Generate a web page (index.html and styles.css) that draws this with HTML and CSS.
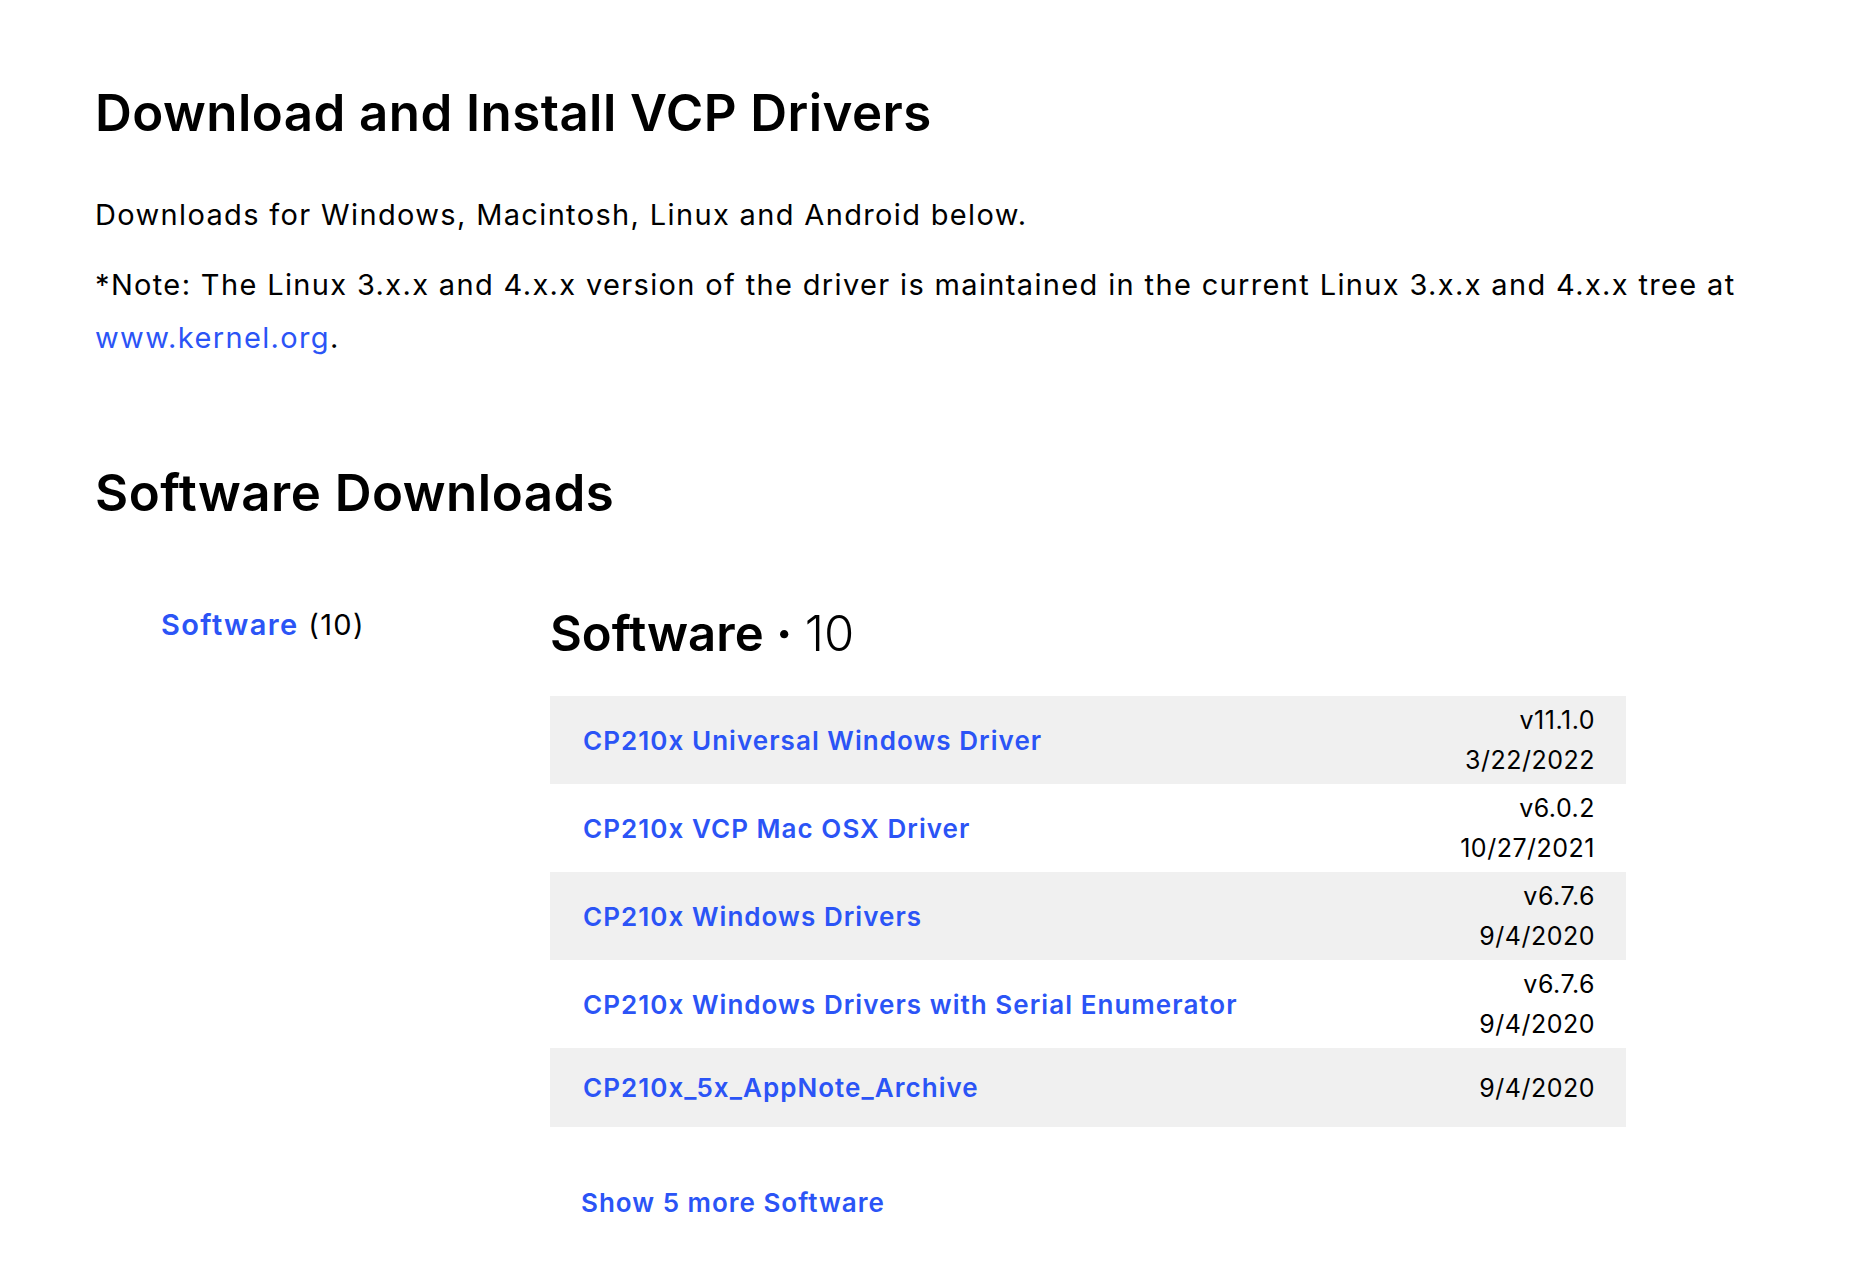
FILE: index.html
```html
<!DOCTYPE html>
<html lang="en">
<head>
<meta charset="utf-8">
<title>Download and Install VCP Drivers</title>
<link rel="stylesheet" href="styles.css">
</head>
<body>
<main class="page">
  <section class="intro">
    <h1 class="title">Download and Install VCP Drivers</h1>
    <p class="text">Downloads for Windows, Macintosh, Linux and Android below.</p>
    <p class="text">*Note: The Linux 3.x.x and 4.x.x version of the driver is maintained in the current Linux 3.x.x and 4.x.x tree at <a class="link" href="#">www.kernel.org</a>.</p>
  </section>
  <section class="downloads">
    <h2 class="section-title">Software Downloads</h2>
    <div class="layout">
      <aside class="sidebar">
        <a class="side-link" href="#">Software</a> <span class="side-count">(10)</span>
      </aside>
      <div class="content">
        <h3 class="group-title">Software <span class="dot">·</span> <span class="count">10</span></h3>
        <ul class="list">
          <li class="row">
            <a class="row-link" href="#">CP210x Universal Windows Driver</a>
            <div class="meta"><span>v11.1.0</span><span>3/22/2022</span></div>
          </li>
          <li class="row">
            <a class="row-link" href="#">CP210x VCP Mac OSX Driver</a>
            <div class="meta"><span>v6.0.2</span><span>10/27/2021</span></div>
          </li>
          <li class="row">
            <a class="row-link" href="#">CP210x Windows Drivers</a>
            <div class="meta"><span>v6.7.6</span><span>9/4/2020</span></div>
          </li>
          <li class="row">
            <a class="row-link" href="#">CP210x Windows Drivers with Serial Enumerator</a>
            <div class="meta"><span>v6.7.6</span><span>9/4/2020</span></div>
          </li>
          <li class="row row-single">
            <a class="row-link" href="#">CP210x_5x_AppNote_Archive</a>
            <div class="meta"><span>9/4/2020</span></div>
          </li>
        </ul>
        <a class="more" href="#">Show 5 more Software</a>
      </div>
    </div>
  </section>
</main>
</body>
</html>
```

FILE: styles.css
```css
* { box-sizing: border-box; }
html, body { margin: 0; padding: 0; background: #ffffff; }
body {
  font-family: Inter, "Noto Sans", "Liberation Sans", sans-serif;
  color: #000000;
}
.page {
  padding: 82px 95px 40px 95px;
}
.title {
  margin: 0;
  font-size: 51px;
  line-height: 62px;
  font-weight: 600;
  letter-spacing: 0.45px;
}
.text {
  margin: 0;
  font-size: 29px;
  line-height: 53px;
  font-weight: 400;
  letter-spacing: 1.35px;
}
.intro .title { margin-bottom: 44px; }
.intro .text + .text { margin-top: 17px; }
.link, .side-link, .row-link, .more {
  color: #2b54f6;
  text-decoration: none;
}
.downloads { margin-top: 98px; }
.section-title {
  margin: 0;
  font-size: 51px;
  line-height: 62px;
  font-weight: 600;
  letter-spacing: 0.5px;
}
.layout {
  display: grid;
  grid-template-columns: 455px 1076px;
  margin-top: 80px;
}
.sidebar {
  padding-left: 66px;
  padding-top: 1px;
  font-size: 29px;
  line-height: 40px;
  letter-spacing: 1.4px;
}
.side-link { font-weight: 600; }
.group-title {
  margin: 0 0 32px 0;
  font-size: 49px;
  line-height: 60px;
  font-weight: 600;
}
.group-title .count { font-weight: 300; }
.group-title .dot { font-weight: 700; }
.list {
  list-style: none;
  margin: 0;
  padding: 0;
}
.row {
  display: flex;
  align-items: center;
  justify-content: space-between;
  height: 88px;
  padding: 0 31px 0 33px;
}
.row:nth-child(odd) { background: #f0f0f0; }
.row-single { height: 79px; }
.row-link {
  font-size: 26px;
  font-weight: 600;
  letter-spacing: 1.05px;
}
.meta {
  display: flex;
  flex-direction: column;
  align-items: flex-end;
  font-size: 25px;
  line-height: 40px;
  letter-spacing: 0.5px;
}
.more {
  display: inline-block;
  margin-top: 60px;
  margin-left: 31px;
  font-size: 26px;
  font-weight: 600;
  letter-spacing: 1px;
}
```
